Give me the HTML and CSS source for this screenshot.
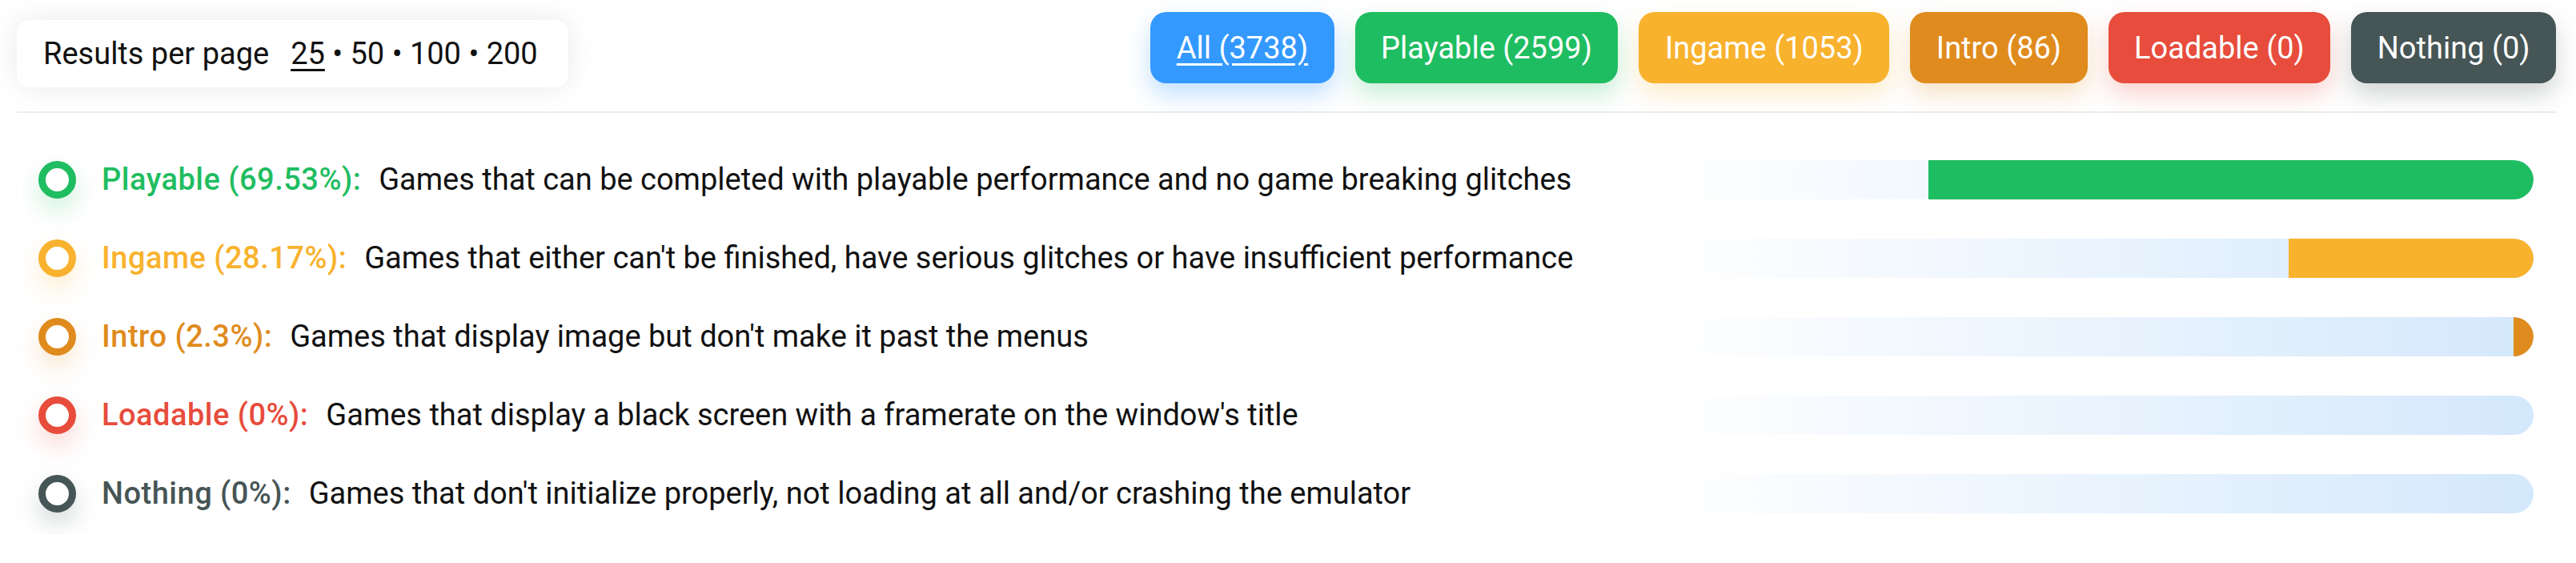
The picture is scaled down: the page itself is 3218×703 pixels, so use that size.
FILE: index.html
```html
<!DOCTYPE html>
<html lang="en">
<head>
  <meta charset="UTF-8" />
  <title>Compatibility list</title>
  <link rel="stylesheet" href="styles.css">
</head>
<body>
  <div class="page">
    <div class="header">
      <div class="per-page">
        <span class="per-page-label">Results per page</span>
        <span class="per-page-opts"><u>25</u> • 50 • 100 • 200</span>
      </div>
      <div class="filters">
        <a class="filter all"><u>All (3738)</u></a>
        <a class="filter playable">Playable (2599)</a>
        <a class="filter ingame">Ingame (1053)</a>
        <a class="filter intro">Intro (86)</a>
        <a class="filter loadable">Loadable (0)</a>
        <a class="filter nothing">Nothing (0)</a>
      </div>
    </div>

    <div class="list">
      <div class="row playable">
        <span class="dot"></span>
        <p class="desc"><span class="label">Playable (69.53%):</span>Games that can be completed with playable performance and no game breaking glitches</p>
        <div class="bar"><div class="fill" style="width: 69.53%"></div></div>
      </div>
      <div class="row ingame">
        <span class="dot"></span>
        <p class="desc"><span class="label">Ingame (28.17%):</span>Games that either can't be finished, have serious glitches or have insufficient performance</p>
        <div class="bar"><div class="fill" style="width: 28.17%"></div></div>
      </div>
      <div class="row intro">
        <span class="dot"></span>
        <p class="desc"><span class="label">Intro (2.3%):</span>Games that display image but don't make it past the menus</p>
        <div class="bar"><div class="fill" style="width: 2.3%"></div></div>
      </div>
      <div class="row loadable">
        <span class="dot"></span>
        <p class="desc"><span class="label">Loadable (0%):</span>Games that display a black screen with a framerate on the window's title</p>
        <div class="bar"><div class="fill" style="width: 0%"></div></div>
      </div>
      <div class="row nothing">
        <span class="dot"></span>
        <p class="desc"><span class="label">Nothing (0%):</span>Games that don't initialize properly, not loading at all and/or crashing the emulator</p>
        <div class="bar"><div class="fill" style="width: 0%"></div></div>
      </div>
    </div>
  </div>
</body>
</html>
```

FILE: styles.css
```css
body {
  margin: 0;
  background: #fff;
  font-family: Roboto, "Noto Sans", sans-serif;
  font-size: 38px;
  color: #111;
}
.page {
  padding: 0 25px 0 21px;
}
.header {
  display: flex;
  justify-content: space-between;
  align-items: flex-start;
  border-bottom: 2px solid #ececec;
  padding-bottom: 30px;
}
.per-page {
  margin-top: 25px;
  height: 84px;
  display: flex;
  align-items: center;
  padding: 0 38px 0 33px;
  background: #fff;
  border-radius: 16px;
  box-shadow: 0 0 34px rgba(0,0,0,0.09);
}
.per-page-label {
  margin-right: 27px;
}
.per-page u {
  text-underline-offset: 6px;
}
.filters {
  display: flex;
  gap: 26px;
  margin-top: 15px;
}
.filter {
  height: 89px;
  display: flex;
  align-items: center;
  padding: 0 32.5px;
  border-radius: 20px;
  color: #fff;
  cursor: pointer;
}
.filter u {
  text-underline-offset: 6px;
}
.filter.all { background: #3399ff; box-shadow: 0 14px 30px rgba(51,153,255,0.3); }
.filter.playable { background: #1fbd61; box-shadow: 0 14px 30px rgba(31,189,97,0.25); }
.filter.ingame { background: #f8b22e; box-shadow: 0 14px 30px rgba(248,178,46,0.25); }
.filter.intro { background: #e08b1e; box-shadow: 0 14px 30px rgba(224,139,30,0.25); }
.filter.loadable { background: #e74c3c; box-shadow: 0 14px 30px rgba(231,76,60,0.25); }
.filter.nothing { background: #465555; box-shadow: 0 14px 30px rgba(70,85,85,0.25); }

.list {
  padding-top: 34px;
  padding-bottom: 2px;
  box-shadow: 0 14px 24px -14px rgba(0,0,0,0.06);
}
.row {
  height: 98px;
  display: flex;
  align-items: center;
  padding: 0 28px 0 27px;
}
.dot {
  flex: none;
  width: 47px;
  height: 47px;
  box-sizing: border-box;
  border: 9px solid currentColor;
  border-radius: 50%;
  background: #fff;
  margin-right: 32px;
}
.desc {
  margin: 0;
  color: #111;
  white-space: nowrap;
}
.label {
  font-weight: 500;
  letter-spacing: 0.5px;
  margin-right: 22px;
}
.bar {
  flex: none;
  margin-left: auto;
  width: 1088px;
  height: 49px;
  display: flex;
  justify-content: flex-end;
  border-radius: 0 25px 25px 0;
  overflow: hidden;
  background: linear-gradient(to right, rgba(214,233,252,0), #d4e8fc);
}
.fill {
  height: 100%;
  border-radius: 0 25px 25px 0;
  background: currentColor;
}
.row.playable { color: #1fbd61; }
.row.ingame { color: #f8b22e; }
.row.intro { color: #e08b1e; }
.row.loadable { color: #e74c3c; }
.row.nothing { color: #465555; }
.row.playable .dot { box-shadow: 0 14px 30px rgba(31,189,97,0.22); }
.row.ingame .dot { box-shadow: 0 14px 30px rgba(248,178,46,0.22); }
.row.intro .dot { box-shadow: 0 14px 30px rgba(224,139,30,0.22); }
.row.loadable .dot { box-shadow: 0 14px 30px rgba(231,76,60,0.22); }
.row.nothing .dot { box-shadow: 0 14px 30px rgba(70,85,85,0.22); }
.row.playable .label { color: #1fbd61; }
.row.ingame .label { color: #f8b22e; }
.row.intro .label { color: #e08b1e; }
.row.loadable .label { color: #e74c3c; }
.row.nothing .label { color: #465555; }
```
